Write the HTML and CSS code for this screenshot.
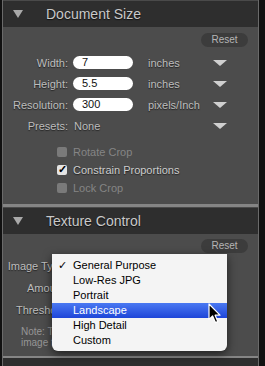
FILE: index.html
```html
<!DOCTYPE html>
<html lang="en">
<head>
    <meta charset="UTF-8">
    <meta name="viewport" content="width=device-width, initial-scale=1.0">
    <title>Document Size</title>
    <link rel="stylesheet" href="styles.css">
</head>
<body>
    <div class="panel">
        <div class="section-head">
            <span class="disclosure"></span>
            <span class="section-title">Document Size</span>
        </div>
        <div class="section-body size-body">
            <div class="reset-row"><span class="reset">Reset</span></div>

            <div class="row">
                <span class="label">Width:</span>
                <span class="field">7</span>
                <span class="unit">inches</span>
                <span class="arrow"></span>
            </div>
            <div class="row">
                <span class="label">Height:</span>
                <span class="field">5.5</span>
                <span class="unit">inches</span>
                <span class="arrow"></span>
            </div>
            <div class="row">
                <span class="label">Resolution:</span>
                <span class="field">300</span>
                <span class="unit">pixels/Inch</span>
                <span class="arrow"></span>
            </div>
            <div class="row">
                <span class="label">Presets:</span>
                <span class="preset">None</span>
                <span class="arrow"></span>
            </div>

            <div class="checks">
                <div class="check disabled"><span class="box"></span>Rotate Crop</div>
                <div class="check"><span class="box checked">✓</span>Constrain Proportions</div>
                <div class="check disabled"><span class="box"></span>Lock Crop</div>
            </div>
        </div>

        <div class="section-head">
            <span class="disclosure"></span>
            <span class="section-title">Texture Control</span>
        </div>
        <div class="section-body texture-body">
            <div class="reset-row"><span class="reset">Reset</span></div>
            <div class="row tall">
                <span class="label">Image Type:</span>
            </div>
            <div class="row tall">
                <span class="label">Amount:</span>
            </div>
            <div class="row">
                <span class="label">Threshold:</span>
            </div>
            <!-- the open menu hides the rest of the note -->
            <p class="note">Note: T<br>image t</p>
        </div>
        <div class="section-foot"></div>

        <!-- open popup menu for Image Type -->
        <ul class="menu">
            <li class="selected">General Purpose</li>
            <li>Low-Res JPG</li>
            <li>Portrait</li>
            <li class="hover">Landscape</li>
            <li>High Detail</li>
            <li>Custom</li>
        </ul>

        <svg class="cursor" width="14" height="22" viewBox="0 0 14 22">
            <path d="M1 1 L1 16.5 L4.6 13 L7.4 19.6 L9.8 18.6 L7.1 12.2 L12 12.2 Z"
                  fill="#000" stroke="#fff" stroke-width="1.2" stroke-linejoin="round"/>
        </svg>
    </div>
</body>
</html>
```

FILE: styles.css
```css
body {
    margin: 0;
    background-color: #111;
    font-family: 'Liberation Sans', Arial, sans-serif;
    font-size: 11px;
    color: #c8c8c8;
}
.panel {
    position: relative;
    width: 255px;
    height: 366px;
    margin-left: 2px;
    border-left: 1px solid #6a6a6a;
    border-right: 1px solid #6a6a6a;
    background-color: #4c4c4c;
    overflow: hidden;
}
.section-head {
    display: flex;
    align-items: center;
    height: 26px;
    background-color: #2e2e2e;
    border-top: 1px solid #4a4a4a;
}
.disclosure {
    width: 0;
    height: 0;
    margin-left: 10px;
    border-left: 5px solid transparent;
    border-right: 5px solid transparent;
    border-top: 8px solid #a9a9a9;
}
.section-title {
    margin-left: 23px;
    font-size: 14px;
    color: #c9c9c9;
    text-shadow: 0 1px 1px #111;
}
.section-body {
    padding-top: 6px;
}
.size-body {
    height: 171px;
    border-bottom: 3px solid #858585;
}
.texture-body {
    height: 117px;
    padding-top: 5px;
    border-bottom: 2px solid #858585;
}
.section-foot {
    height: 10px;
    background-color: #2e2e2e;
}
.reset-row {
    display: flex;
    justify-content: flex-end;
    padding-right: 10px;
}
.reset {
    width: 47px;
    height: 14px;
    line-height: 14px;
    text-align: center;
    border-radius: 7px;
    background-color: #3c3c3c;
    color: #b5b5b5;
    font-size: 10px;
}
.row {
    display: flex;
    align-items: center;
    height: 21px;
}
.size-body .reset-row {
    margin-bottom: 5px;
}
.texture-body .reset-row {
    margin-bottom: 2px;
}
.row.tall {
    height: 22px;
}
.label {
    width: 65px;
    text-align: right;
    color: #bdbdbd;
    text-shadow: 0 1px 1px #222;
}
.field {
    width: 51px;
    height: 13px;
    line-height: 13px;
    margin-left: 5px;
    padding-left: 9px;
    border-radius: 7px;
    background-color: #fff;
    color: #111;
    font-size: 11px;
}
.unit {
    width: 65px;
    margin-left: 15px;
    color: #bdbdbd;
    text-shadow: 0 1px 1px #222;
}
.preset {
    width: 139px;
    margin-left: 6px;
    color: #bdbdbd;
    text-shadow: 0 1px 1px #222;
}
.arrow {
    width: 0;
    height: 0;
    border-left: 7px solid transparent;
    border-right: 7px solid transparent;
    border-top: 6px solid #d0d0d0;
}
.checks {
    margin-top: 7px;
}
.check {
    display: flex;
    align-items: center;
    height: 18px;
    padding-left: 54px;
    color: #cdcdcd;
    text-shadow: 0 1px 1px #222;
}
.check.disabled {
    color: #858585;
    text-shadow: none;
}
.box {
    width: 10px;
    height: 10px;
    margin-right: 6px;
    border-radius: 2px;
    background-color: #7a7a7a;
}
.box.checked {
    background-color: #e4e4e4;
    color: #000;
    font-size: 11px;
    line-height: 9px;
    font-weight: bold;
    text-shadow: none;
    text-indent: 1px;
}
.note {
    margin: 6px 0 0 18px;
    font-size: 10px;
    line-height: 11px;
    color: #969696;
}
.menu {
    position: absolute;
    left: 49px;
    top: 254px;
    width: 175px;
    margin: 0;
    padding: 4px 0 3px;
    list-style: none;
    background-color: #f4f4f4;
    border-radius: 0 0 6px 6px;
    box-shadow: 0 3px 10px rgba(0,0,0,0.6);
}
.menu li {
    height: 15px;
    line-height: 15px;
    padding-left: 21px;
    color: #000;
    font-size: 11px;
}
.menu li.selected::before {
    content: '✓';
    position: absolute;
    left: 6px;
}
.menu li.hover {
    background: linear-gradient(#4a79f2, #1e45d8);
    color: #fff;
}
.cursor {
    position: absolute;
    left: 205px;
    top: 303px;
}
```
